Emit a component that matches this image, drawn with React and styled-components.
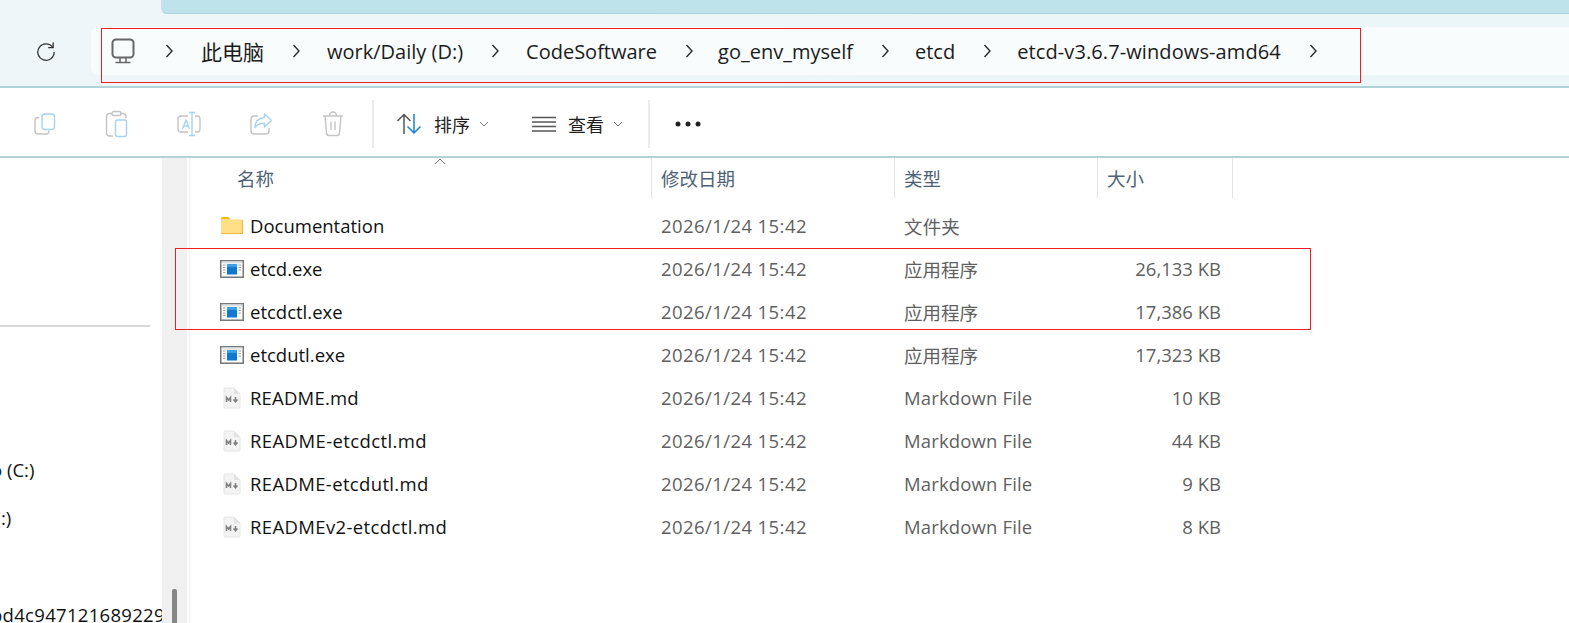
import React from "react";
import styled, { createGlobalStyle } from "styled-components";

const Global = createGlobalStyle`
  html, body { margin: 0; padding: 0; background: #fff; overflow: hidden; }
  body { font-family: "Open Sans", "Noto Sans CJK SC", sans-serif; }
  #root { width: 1569px; height: 623px; overflow: hidden; }
`;

const Page = styled.div`
  position: relative;
  width: 1569px;
  height: 623px;
  display: flex;
  flex-direction: column;
  overflow: hidden;
  background: #fff;
`;
const TopBand = styled.header`
  height: 86px;
  flex: none;
  display: flex;
  flex-direction: column;
  background: linear-gradient(90deg, #eff6f9 0%, #eaf6f8 100%);
  border-bottom: 2px solid #b2d2da;
`;
const TabEdge = styled.div`
  height: 13px;
  margin-left: 161px;
  flex: none;
  background: #bfe3ea;
  border-bottom: 1px solid #aed5dd;
  border-left: 1px solid #c8e0e6;
  border-bottom-left-radius: 6px;
`;
const AddressRow = styled.div`
  margin-top: 13px;
  height: 48px;
  display: flex;
  align-items: center;
`;
const Refresh = styled.div`
  width: 91px;
  flex: none;
  display: flex;
  justify-content: center;
`;
const AddressField = styled.div`
  flex: 1;
  height: 48px;
  box-sizing: border-box;
  padding-left: 21px;
  display: flex;
  align-items: center;
  background: #f8fcfd;
  border-radius: 8px 0 0 8px;
`;
const PcSlot = styled.div`
  width: 52px;
  flex: none;
  display: flex;
  margin-left: -1px;
`;
const Crumb = styled.span`
  font-size: ${(p) => p.$size || 20}px;
  letter-spacing: ${(p) => p.$ls || 0}px;
  color: #1b1b1b;
  white-space: nowrap;
  line-height: 50px;
  height: 48px;
`;
const Sep = styled.span`
  width: 12px;
  flex: none;
  margin: 0 ${(p) => p.$right}px 0 ${(p) => p.$left}px;
  display: flex;
  justify-content: center;
`;
const Toolbar = styled.div`
  height: 70px;
  flex: none;
  box-sizing: border-box;
  padding: 4px 0 0 9px;
  display: flex;
  align-items: center;
  background: #fff;
  border-bottom: 2px solid #b2d2da;
`;
const ToolIcon = styled.div`
  width: 72px;
  display: flex;
  justify-content: center;
`;
const ToolSep = styled.div`
  width: 2px;
  height: 48px;
  flex: none;
  background: #ebebeb;
  margin-left: ${(p) => p.$ml || 0}px;
`;
const ToolButton = styled.div`
  display: flex;
  align-items: center;
  margin-left: ${(p) => p.$ml}px;
`;
const ToolLabel = styled.span`
  font-size: 18px;
  color: #1f1f1f;
  margin-left: ${(p) => p.$ml}px;
  margin-right: 9px;
`;
const Body = styled.div`
  flex: 1;
  display: flex;
  min-height: 0;
`;
const Sidebar = styled.aside`
  width: 162px;
  flex: none;
  display: flex;
  flex-direction: column;
  overflow: hidden;
  background: #fff;
`;
const SideRule = styled.div`
  margin-top: 167px;
  width: 150px;
  height: 2px;
  background: #d8d8d8;
  flex: none;
`;
const SideItem = styled.div`
  font-size: 18.5px;
  color: #111;
  white-space: nowrap;
  line-height: 26px;
  letter-spacing: ${(p) => p.$ls || 0}px;
  margin-top: ${(p) => p.$mt}px;
  margin-left: ${(p) => p.$ml}px;
  flex: none;
`;
const Gutter = styled.div`
  width: 25px;
  flex: none;
  background: #f0f0f0;
  display: flex;
  justify-content: center;
  align-items: flex-end;
`;
const Thumb = styled.div`
  width: 5px;
  height: 34px;
  background: #868686;
  border-radius: 2px 2px 0 0;
  margin-right: 1px;
`;
const Main = styled.main`
  flex: 1;
  border-left: 1px solid #f0f0f0;
  margin-left: 2px;
  min-width: 0;
`;
const Grid = styled.div`
  display: grid;
  grid-template-columns: 462px 243px 203px 135px;
  width: 1043px;
`;
const HeadCell = styled.div`
  position: relative;
  height: 40px;
  box-sizing: border-box;
  padding-left: ${(p) => p.$pl}px;
  margin-bottom: 6px;
  font-size: 18.5px;
  line-height: 41px;
  color: #4e6175;
  border-right: 1px solid #e4e4e4;
`;
const SortCaret = styled.svg`
  position: absolute;
  left: 244px;
  top: 0;
`;
const Row = styled.div`
  display: contents;
`;
const NameCell = styled.div`
  height: 43px;
  display: flex;
  align-items: center;
  padding-left: 30px;
  font-size: 18.5px;
  color: #111;
  white-space: nowrap;
  letter-spacing: ${(p) => p.$ls || 0}px;
`;
const IconBox = styled.span`
  width: 30px;
  flex: none;
  display: flex;
  padding-left: ${(p) => p.$pl || 0}px;
  box-sizing: border-box;
`;
const Cell = styled.div`
  height: 43px;
  display: flex;
  align-items: center;
  padding-left: 9px;
  font-size: 18.5px;
  color: #5f5f5f;
  white-space: nowrap;
  letter-spacing: ${(p) => p.$ls || 0}px;
`;
const SizeCell = styled(Cell)`
  justify-content: flex-end;
  padding-left: 0;
  padding-right: 12px;
`;
const Callout = styled.div`
  position: absolute;
  box-sizing: border-box;
  border: 1px solid #ee1c25;
  pointer-events: none;
  left: ${(p) => p.$x}px;
  top: ${(p) => p.$y}px;
  width: ${(p) => p.$w}px;
  height: ${(p) => p.$h}px;
`;

const Chevron = () => (
  <svg width="10" height="16" viewBox="0 0 10 16" fill="none">
    <path d="M2.500 2l5.500 6-5.500 6" stroke="#2a2a2a" strokeWidth="1.4" />
  </svg>
);
const SmallChevron = () => (
  <svg width="10" height="6" viewBox="0 0 10 6" fill="none">
    <path d="M1 1l4 4 4-4" stroke="#777" strokeWidth="1" />
  </svg>
);
const RefreshIcon = () => (
  <svg width="20" height="20" viewBox="0 0 20 20" fill="none">
    <path d="M16.6 6.2A8.2 8.2 0 1 0 18.2 11" stroke="#333" strokeWidth="1.3" />
    <path d="M17.2 1.6v5h-5" stroke="#333" strokeWidth="1.3" />
  </svg>
);
const PcIcon = () => (
  <svg width="24" height="26" viewBox="0 0 24 26" fill="none">
    <rect x="1.5" y="1.5" width="21" height="18" rx="3.5" stroke="#666" strokeWidth="2" />
    <path d="M9 20v4M15 20v4M4.5 24.5h15" stroke="#666" strokeWidth="1.5" />
  </svg>
);
const CopyIcon = () => (
  <svg width="24" height="24" viewBox="0 0 24 24" fill="none">
    <path d="M6 5.5H5a3 3 0 0 0-3 3V19a3 3 0 0 0 3 3h8a3 3 0 0 0 3-3v-.5" stroke="#c4c4c4" strokeWidth="1.4" />
    <rect x="9" y="2" width="12.5" height="15.5" rx="3" stroke="#a5d3f5" strokeWidth="1.4" />
  </svg>
);
const PasteIcon = () => (
  <svg width="24" height="28" viewBox="0 0 24 28" fill="none">
    <path d="M7 3.5H4.5a3 3 0 0 0-3 3V23a3 3 0 0 0 3 3H8M16 3.5h2a3 3 0 0 1 3 3V8" stroke="#c4c4c4" strokeWidth="1.4" />
    <rect x="7" y="1.5" width="9" height="4" rx="2" stroke="#c4c4c4" strokeWidth="1.4" />
    <rect x="10.5" y="10" width="11" height="16.5" rx="2" stroke="#a5d3f5" strokeWidth="1.4" />
  </svg>
);
const RenameIcon = () => (
  <svg width="26" height="26" viewBox="0 0 26 26" fill="none">
    <path d="M12 5H5a3 3 0 0 0-3 3v10a3 3 0 0 0 3 3h7M19 5h2a3 3 0 0 1 3 3v10a3 3 0 0 1-3 3h-2" stroke="#c4c4c4" strokeWidth="1.4" />
    <path d="M6.5 18l3.5-9 3.5 9M7.8 15h4.4" stroke="#a5d3f5" strokeWidth="1.4" />
    <path d="M16 1.5v23M13 1.5h6M13 24.500h6" stroke="#a5d3f5" strokeWidth="1.4" />
  </svg>
);
const ShareIcon = () => (
  <svg width="24" height="24" viewBox="0 0 24 24" fill="none">
    <path d="M9 4H5a3 3 0 0 0-3 3v12a3 3 0 0 0 3 3h12a3 3 0 0 0 3-3v-3" stroke="#c4c4c4" strokeWidth="1.4" />
    <path d="M15.5 2l7 6.5-7 6.5v-3.8c-4.500 0-7.500 1-9.500 4.300 0-5.500 3-9.500 9.500-10z" stroke="#a5d3f5" strokeWidth="1.4" strokeLinejoin="round" />
  </svg>
);
const TrashIcon = () => (
  <svg width="22" height="26" viewBox="0 0 22 26" fill="none">
    <path d="M1 5h20M7.500 4.500a3.500 3.500 0 0 1 7 0" stroke="#c4c4c4" strokeWidth="1.4" />
    <path d="M3 5l1.500 17a2.500 2.500 0 0 0 2.500 2.500h8a2.500 2.500 0 0 0 2.500-2.500L19 5" stroke="#c4c4c4" strokeWidth="1.4" />
    <path d="M9 10.500v8.500M13 10.500v8.500" stroke="#c4c4c4" strokeWidth="1.400" />
  </svg>
);
const SortIcon = () => (
  <svg width="26" height="22" viewBox="0 0 26 22" fill="none">
    <path d="M8 21V2M1.500 8L8 1.500 14.500 8" stroke="#555" strokeWidth="1.500" />
    <path d="M18 1v19M11.500 13.500L18 20l6.500-6.500" stroke="#1283d8" strokeWidth="1.500" />
  </svg>
);
const ViewIcon = () => (
  <svg width="24" height="16" viewBox="0 0 24 16" fill="none">
    <path d="M0 1.500h24M0 6h24M0 10.500h24M0 15h24" stroke="#555" strokeWidth="1.300" />
  </svg>
);
const Dots = () => (
  <svg width="26" height="6" viewBox="0 0 26 6">
    <circle cx="3" cy="3" r="2.500" fill="#222" />
    <circle cx="13" cy="3" r="2.500" fill="#222" />
    <circle cx="23" cy="3" r="2.500" fill="#222" />
  </svg>
);
const FolderIcon = () => (
  <svg width="22" height="17" viewBox="0 0 22 17">
    <path d="M0 1.500A1.500 1.500 0 0 1 1.500 0h6L10 2.500H0z" fill="#f5b81f" />
    <rect x="0" y="2.500" width="22" height="14.500" rx="1" fill="#ffdf85" />
    <path d="M0 16h22v1H0zM21 3h1v14h-1z" fill="#efb93a" />
  </svg>
);
const ExeIcon = () => (
  <svg width="24" height="18" viewBox="0 0 24 18">
    <rect x="0.750" y="0.750" width="22.500" height="16.500" fill="#fbfbfb" stroke="#777" strokeWidth="1.500" />
    <rect x="1.500" y="1.500" width="21" height="2" fill="#dfe3e8" />
    <rect x="7" y="4" width="10" height="10.500" fill="#0f78d0" />
    <rect x="7" y="4" width="10" height="3" fill="#3aa0e6" />
    <path d="M3 5h2.500M3 7.500h2.500M3 10h2.500M3 12.500h2.500M18.500 5H21M18.500 7.500H21M18.500 10H21" stroke="#a8a8a8" strokeWidth="1" />
  </svg>
);
const MdIcon = () => (
  <svg width="18" height="22" viewBox="0 0 18 22">
    <path d="M1 2a1 1 0 0 1 1-1h9l6 6v13a1 1 0 0 1-1 1H2a1 1 0 0 1-1-1z" fill="#f3f3f3" stroke="#e6e6e6" />
    <path d="M11 1v6h6" fill="#e2e2e2" />
    <path d="M3.500 15v-4.500l2 2.500 2-2.500V15" fill="none" stroke="#7f7f7f" strokeWidth="1.500" />
    <path d="M12.500 10v4M10.500 12.500l2 2.300 2-2.300" fill="none" stroke="#7f7f7f" strokeWidth="1.500" />
  </svg>
);

const crumbs = [
  { label: "此电脑", size: 21, extra: 1 },
  { label: "work/Daily (D:)", extra: 1 },
  { label: "CodeSoftware", extra: -1 },
  { label: "go_env_myself", extra: 0 },
  { label: "etcd", extra: 0 },
  { label: "etcd-v3.6.7-windows-amd64", extra: 0, ls: 0.1 },
];

const DATE = "2026/1/24 15:42";
const rows = [
  { icon: <FolderIcon />, pad: 1, name: "Documentation", type: "文件夹", size: "" },
  { icon: <ExeIcon />, name: "etcd.exe", type: "应用程序", size: "26,133 KB" },
  { icon: <ExeIcon />, name: "etcdctl.exe", type: "应用程序", size: "17,386 KB" },
  { icon: <ExeIcon />, name: "etcdutl.exe", type: "应用程序", size: "17,323 KB" },
  { icon: <MdIcon />, pad: 3, ls: 0.2, name: "README.md", type: "Markdown File", size: "10 KB" },
  { icon: <MdIcon />, pad: 3, ls: 0.4, name: "README-etcdctl.md", type: "Markdown File", size: "44 KB" },
  { icon: <MdIcon />, pad: 3, ls: 0.35, name: "README-etcdutl.md", type: "Markdown File", size: "9 KB" },
  { icon: <MdIcon />, pad: 3, ls: 0.37, name: "READMEv2-etcdctl.md", type: "Markdown File", size: "8 KB" },
];

export default function App() {
  return (
    <Page>
      <Global />
      <TopBand>
        <TabEdge />
        <AddressRow>
          <Refresh><RefreshIcon /></Refresh>
          <AddressField>
            <PcSlot><PcIcon /></PcSlot>
            <Sep $left={0} $right={26}><Chevron /></Sep>
            {crumbs.map((c) => (
              <React.Fragment key={c.label}>
                <Crumb $size={c.size} $ls={c.ls}>{c.label}</Crumb>
                <Sep $left={26} $right={24 + c.extra}><Chevron /></Sep>
              </React.Fragment>
            ))}
          </AddressField>
        </AddressRow>
      </TopBand>
      <Toolbar>
        <ToolIcon><CopyIcon /></ToolIcon>
        <ToolIcon><PasteIcon /></ToolIcon>
        <ToolIcon><RenameIcon /></ToolIcon>
        <ToolIcon><ShareIcon /></ToolIcon>
        <ToolIcon><TrashIcon /></ToolIcon>
        <ToolSep $ml={3} />
        <ToolButton $ml={22}>
          <SortIcon />
          <ToolLabel $ml={12}>排序</ToolLabel>
          <SmallChevron />
        </ToolButton>
        <ToolButton $ml={43}>
          <ViewIcon />
          <ToolLabel $ml={12}>查看</ToolLabel>
          <SmallChevron />
        </ToolButton>
        <ToolSep $ml={25} />
        <ToolButton $ml={25}><Dots /></ToolButton>
      </Toolbar>
      <Body>
        <Sidebar>
          <SideRule />
          <SideItem $mt={130} $ml={-9}>o (C:)</SideItem>
          <SideItem $mt={22} $ml={1}>:)</SideItem>
          <SideItem $mt={71} $ml={-9} $ls={0.3}>bd4c947121689229</SideItem>
        </Sidebar>
        <Gutter><Thumb /></Gutter>
        <Main>
          <Grid>
            <HeadCell $pl={47}>
              名称
              <SortCaret width="12" height="7" viewBox="0 0 12 7" fill="none">
                <path d="M1 6l5-5 5 5" stroke="#777" strokeWidth="1" />
              </SortCaret>
            </HeadCell>
            <HeadCell $pl={9}>修改日期</HeadCell>
            <HeadCell $pl={9}>类型</HeadCell>
            <HeadCell $pl={9}>大小</HeadCell>
            {rows.map((r) => (
              <Row key={r.name}>
                <NameCell $ls={r.ls}><IconBox $pl={r.pad}>{r.icon}</IconBox>{r.name}</NameCell>
                <Cell $ls={0.42}>{DATE}</Cell>
                <Cell $ls={r.size.length < 6 ? 0.15 : 0}>{r.type}</Cell>
                <SizeCell>{r.size}</SizeCell>
              </Row>
            ))}
          </Grid>
        </Main>
      </Body>
      <Callout $x={101} $y={28} $w={1260} $h={55} />
      <Callout $x={175} $y={248} $w={1136} $h={82} />
    </Page>
  );
}
